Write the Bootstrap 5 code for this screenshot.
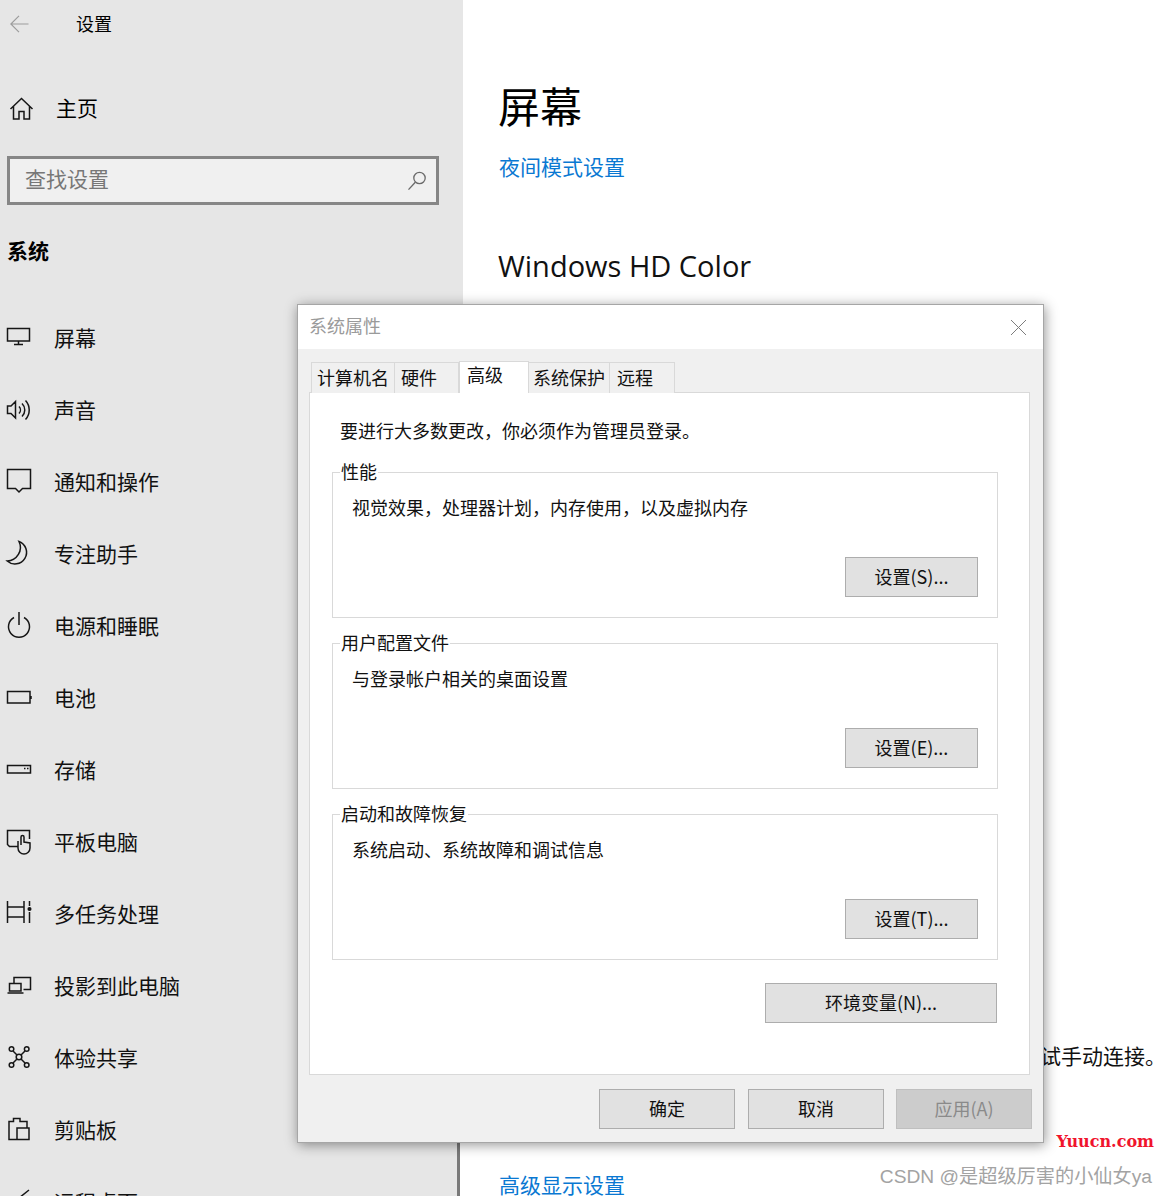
<!DOCTYPE html>
<html lang="zh">
<head>
<meta charset="utf-8">
<title>设置</title>
<link href="https://cdn.jsdelivr.net/npm/bootstrap@5.3.0/dist/css/bootstrap.min.css" rel="stylesheet">
<style>
html,body{height:1196px;overflow:hidden}
body{font-family:"Liberation Sans","Noto Sans CJK SC",sans-serif;background:#fff;color:#000;position:relative}
.shell{height:1196px}
.side{width:463px;background:#e6e6e6;font-size:21px;flex:none}
.topbar{height:48px;padding-left:10px;font-size:18px}
.topbar .ttl{margin-left:46px;padding-top:2px}
.homerow{height:48px;margin-top:37px;padding-left:10px}
.homerow .lbl{margin-left:22px}
.searchbox{width:432px;height:49px;margin:23px 0 0 7px;border:3px solid #868686;background:#f0f0f0;padding:0 9px 0 15px;color:#777}
.searchbox span{padding-bottom:2px}
.sect{margin:32px 0 35px 7px;line-height:30px;font-weight:700;font-size:21px}
.navrow{height:72px;padding-left:7px;gap:23px;color:#111}
.navrow span{padding-top:2px}
.ico{width:24px;height:24px;flex:none;overflow:visible;fill:none;stroke:#161616;stroke-width:1.5}
.main{padding-left:35px;flex:1;min-width:0}
.pgtitle{font-size:42px;line-height:60px;margin:79px 0 0;font-weight:400}
.plink{display:block;font-size:21px;line-height:30px;color:#0a78d2;text-decoration:none;margin-left:1px}
.plink.first{margin-top:14px}
.plink.second{margin-top:99px}
.subhead{font-family:"Open Sans","Noto Sans",sans-serif;font-size:29px;line-height:40px;margin:63px 0 0 0;font-weight:400;color:#111}
.hidtext{font-size:21px;line-height:30px;margin-top:756px;white-space:nowrap;color:#111}
.scrollmark{position:absolute;left:457px;top:1143px;bottom:0;width:6px;background:#7a7a7a;border-right:3px solid #fff}
.dlg{position:absolute;left:297px;top:304px;width:747px;height:839px;border:1px solid #a6a6a6;background:#f0f0f0;box-shadow:1px 2px 12px rgba(0,0,0,.42);font-size:18px}
.dlghead{height:44px;background:#fff;padding:0 16px 0 11px;color:#9a9a9a;line-height:44px}
.dlgtabs{padding:12px 0 0 13px;border:0;margin-bottom:-1px;position:relative;z-index:1;align-items:flex-end}
.dlgtabs .nav-link{border:1px solid #d9d9d9;border-bottom:0;border-left-width:0;border-radius:0;height:31px;padding:0 0 0 6px;margin:0;color:#111;background:#f0f0f0;line-height:32px;white-space:nowrap}
.dlgtabs .nav-item:first-child .nav-link{border-left-width:1px;width:84px;padding-left:5px}
.dlgtabs .nav-link.active{height:32px;width:70px;background:#fff;border:1px solid #d9d9d9;border-bottom:0;color:#111;padding:0 7px;line-height:28px;margin-bottom:0}
.dlgtabs .nav-item.t2 .nav-link{width:64px}
.dlgtabs .nav-item.t4 .nav-link{width:81px;padding-left:4px}
.dlgtabs .nav-item.t5 .nav-link{width:65px;padding-left:7px}
.panel-box{margin-left:11px;width:721px;height:683px;background:#fff;border:1px solid #d9d9d9;padding:27px 31px 0 22px}
.panel-box .note{line-height:24px;margin:0 0 28px 8px;color:#111}
.grp{position:relative;height:146px;border:1px solid #d9d9d9;padding:24px 19px 20px;margin-bottom:25px}
.grp.lastgrp{margin-bottom:23px}
.grplegend{position:absolute;left:7px;top:-12px;line-height:24px;background:#fff;padding:0 1px;white-space:nowrap;color:#111}
.grptext{line-height:24px;color:#111}
.wbtn{border:1px solid #adadad;border-radius:0;background:#e1e1e1;color:#111;font-family:"Noto Sans CJK SC",sans-serif;font-size:18px;height:40px;padding:0 0 3px;line-height:34px}
.wbtn.w133{width:133px}
.wbtn.w232{width:232px;margin-right:1px}
.wbtn.w136{width:136px}
.wbtn.off,.wbtn.off:disabled{background:#cccccc;border-color:#bfbfbf;color:#8a8a8a;opacity:1}
.dlgfoot{padding:14px 11px 0 0;gap:12px}
.dlgfoot .wbtn:first-child{margin-right:1px}
.wm1{position:absolute;right:12px;top:1131px;font-family:"DejaVu Serif",serif;font-weight:700;font-size:16px;line-height:22px;color:#f0142d}
.wm2{position:absolute;right:14px;top:1163px;font-size:19.2px;line-height:28px;color:#a3a3a3;white-space:nowrap}
</style>
</head>
<body>
<div class="shell d-flex">
  <aside class="side overflow-hidden">
    <div class="topbar d-flex align-items-center">
      <svg width="20" height="18" viewBox="0 0 20 18" fill="none" stroke="#9c9c9c" stroke-width="1.2"><path d="M0.5 9H18.5M9 .8L.8 9L9 17.2"/></svg>
      <span class="ttl">设置</span>
    </div>
    <div class="homerow d-flex align-items-center">
      <svg class="ico" viewBox="0 0 24 24"><path d="M.5 12L11.500 1.500L22.500 12M3.500 9.500V22H9V14.500H14V22H19.500V9.500"/></svg>
      <span class="lbl">主页</span>
    </div>
    <div class="searchbox d-flex align-items-center justify-content-between">
      <span>查找设置</span>
      <svg width="20" height="20" viewBox="0 0 20 20" fill="none" stroke="#6a6a6a" stroke-width="1.3"><circle cx="12.500" cy="7" r="5.700"/><path d="M8.300 11.200L1.500 18.600"/></svg>
    </div>
    <div class="sect">系统</div>
    <div class="navrow d-flex align-items-center"><svg class="ico" viewBox="0 0 24 24"><path d="M.5 2.500H22.500V15H.5ZM11.500 15V18M7 18.500H16"/></svg><span>屏幕</span></div>
    <div class="navrow d-flex align-items-center"><svg class="ico" viewBox="0 0 24 24"><path d="M.5 8H4L8.500 3.500V20L4 15.500H.5ZM12 8.500a5 5 0 0 1 0 7M15 5.500a9 9 0 0 1 0 13M18.500 2.500a14 14 0 0 1 0 19"/></svg><span>声音</span></div>
    <div class="navrow d-flex align-items-center"><svg class="ico" viewBox="0 0 24 24"><path d="M.5 -.5H23.500V18.500H15.500L12 22L8.500 18.500H.5Z"/></svg><span>通知和操作</span></div>
    <div class="navrow d-flex align-items-center"><svg class="ico" viewBox="0 0 24 24"><path d="M12 -.5A11.600 11.600 0 1 1 .2 19A13.600 13.600 0 0 0 12 -.5Z"/></svg><span>专注助手</span></div>
    <div class="navrow d-flex align-items-center"><svg class="ico" viewBox="0 0 24 24"><path d="M7 3.500A10.500 10.500 0 1 0 17 3.500M12 -2V11"/></svg><span>电源和睡眠</span></div>
    <div class="navrow d-flex align-items-center"><svg class="ico" viewBox="0 0 24 24"><path d="M.5 5.500H23V17H.5ZM24 10V13"/></svg><span>电池</span></div>
    <div class="navrow d-flex align-items-center"><svg class="ico" viewBox="0 0 24 24"><path d="M.5 7.500H23.500V15H.5ZM17 10.500H18.500M20 10.500H21.500"/></svg><span>存储</span></div>
    <div class="navrow d-flex align-items-center"><svg class="ico" viewBox="0 0 24 24"><path d="M11 16.500H2.500L.5 14.500V.5H22.500V9M11 11v7a6 6 0 0 0 12 0v-5l-6-1V7a1.500 1.500 0 0 0-3 0v8"/></svg><span>平板电脑</span></div>
    <div class="navrow d-flex align-items-center"><svg class="ico" viewBox="0 0 24 24"><path d="M.5 -1V5H17V-1M.5 21V15H17V21M.5 5V15M17 5V15M22.500 -1V4M22.500 10V21"/><circle cx="22.500" cy="7" r="1.300" fill="#222"/></svg><span>多任务处理</span></div>
    <div class="navrow d-flex align-items-center"><svg class="ico" viewBox="0 0 24 24"><path d="M7 9V3.500H23.500V15.500H16.500M2.500 9.500H14V17H2.500ZM.5 19H16.500"/></svg><span>投影到此电脑</span></div>
    <div class="navrow d-flex align-items-center"><svg class="ico" viewBox="0 0 24 24"><circle cx="4.500" cy="3" r="2.300"/><circle cx="19.700" cy="3" r="2.300"/><circle cx="4.500" cy="19" r="2.300"/><circle cx="19.700" cy="19" r="2.300"/><circle cx="12" cy="11" r="2.800"/><path d="M6 5L10 9M18 5L14 9M6 17L10 13M18 17L14 13"/></svg><span>体验共享</span></div>
    <div class="navrow d-flex align-items-center"><svg class="ico" viewBox="0 0 24 24"><path d="M10 21.500H2V3.500H6.500V.5H13V3.500H20V10M10 10H22V21.500H10Z"/></svg><span>剪贴板</span></div>
    <div class="navrow d-flex align-items-center"><svg class="ico" viewBox="0 0 24 24"><path d="M22 0L12 8M12 8L6 14"/></svg><span>远程桌面</span></div>
  </aside>
  <main class="main overflow-hidden">
    <h1 class="pgtitle">屏幕</h1>
    <a class="plink first" href="#">夜间模式设置</a>
    <h2 class="subhead">Windows HD Color</h2>
    <div class="hidtext d-flex justify-content-end">请尝试手动连接。</div>
    <a class="plink second" href="#">高级显示设置</a>
  </main>
</div>
<div class="scrollmark"></div>

<section class="dlg d-flex flex-column">
  <div class="dlghead d-flex justify-content-between align-items-center">
    <span>系统属性</span>
    <svg width="17" height="17" viewBox="0 0 17 17" fill="none" stroke="#7d7d7d" stroke-width="1"><path d="M1 1L16 16M16 1L1 16"/></svg>
  </div>
  <ul class="nav nav-tabs dlgtabs">
    <li class="nav-item"><a class="nav-link" href="#">计算机名</a></li>
    <li class="nav-item t2"><a class="nav-link" href="#">硬件</a></li>
    <li class="nav-item"><a class="nav-link active" href="#">高级</a></li>
    <li class="nav-item t4"><a class="nav-link" href="#">系统保护</a></li>
    <li class="nav-item t5"><a class="nav-link" href="#">远程</a></li>
  </ul>
  <div class="panel-box">
    <p class="note">要进行大多数更改，你必须作为管理员登录。</p>
    <div class="grp d-flex flex-column justify-content-between">
      <span class="grplegend">性能</span>
      <div class="grptext">视觉效果，处理器计划，内存使用，以及虚拟内存</div>
      <div class="d-flex justify-content-end"><button class="btn wbtn w133">设置(S)...</button></div>
    </div>
    <div class="grp d-flex flex-column justify-content-between">
      <span class="grplegend">用户配置文件</span>
      <div class="grptext">与登录帐户相关的桌面设置</div>
      <div class="d-flex justify-content-end"><button class="btn wbtn w133">设置(E)...</button></div>
    </div>
    <div class="grp lastgrp d-flex flex-column justify-content-between">
      <span class="grplegend">启动和故障恢复</span>
      <div class="grptext">系统启动、系统故障和调试信息</div>
      <div class="d-flex justify-content-end"><button class="btn wbtn w133">设置(T)...</button></div>
    </div>
    <div class="d-flex justify-content-end"><button class="btn wbtn w232">环境变量(N)...</button></div>
  </div>
  <div class="dlgfoot d-flex justify-content-end">
    <button class="btn wbtn w136">确定</button>
    <button class="btn wbtn w136">取消</button>
    <button class="btn wbtn w136 off" disabled>应用(A)</button>
  </div>
</section>

<div class="wm1">Yuucn.com</div>
<div class="wm2">CSDN @是超级厉害的小仙女ya</div>
<script src="https://cdn.jsdelivr.net/npm/bootstrap@5.3.0/dist/js/bootstrap.bundle.min.js"></script>
</body>
</html>
